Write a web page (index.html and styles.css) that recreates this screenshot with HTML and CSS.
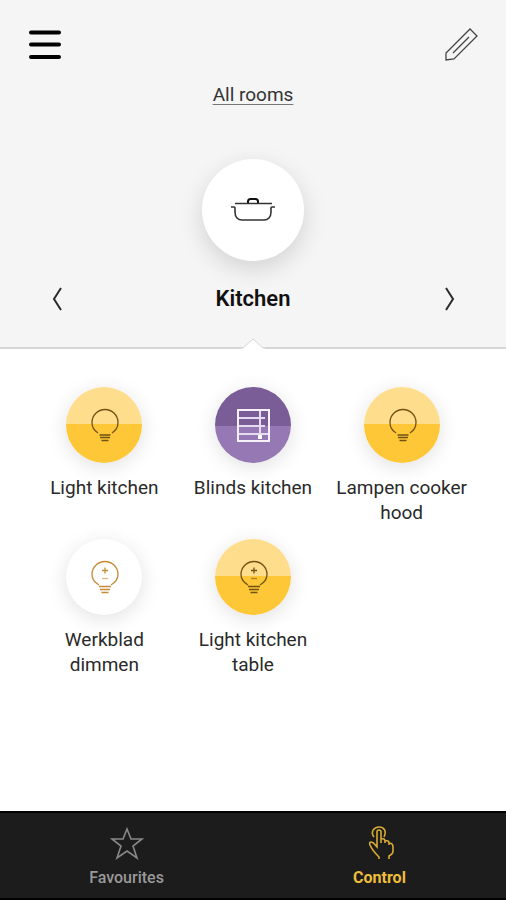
FILE: index.html
```html
<!DOCTYPE html>
<html lang="en">
<head>
<meta charset="utf-8">
<meta name="viewport" content="width=device-width, initial-scale=1">
<title>Kitchen</title>
<link rel="stylesheet" href="styles.css">
</head>
<body>
<svg class="symbols" aria-hidden="true">
  <symbol id="bulb" viewBox="0 0 36 36">
    <path d="M12 26C8 23.500 6 19 6 15.500a13 13 0 0 1 26 0c0 3.500-2 8-6 10.500"/>
    <path d="M13.500 28h11M14 30.500h10M15.500 33.500h7"/>
  </symbol>
  <symbol id="dimmer" viewBox="0 0 36 36">
    <path d="M13 26C8 23 6 19 6 15.500a13 13 0 0 1 26 0c0 3.500-2 7.500-7 10.500"/>
    <path d="M13 27.500h12M14 30.500h10M15.500 33.500h7M19 8.500v6M16 11.500h6"/>
    <path d="M16 19.500h6" opacity="0.600"/>
  </symbol>
</svg>
<header class="room">
  <div class="toolbar">
    <button class="icon-button" aria-label="Menu">
      <svg class="icon menu" viewBox="0 0 34 34"><path d="M3 4.500h28M3 16.500h28M3 29h28"/></svg>
    </button>
    <button class="icon-button" aria-label="Edit">
      <svg class="icon pencil" viewBox="0 0 34 34"><path d="M2 32v-7L26 1l7 7L10 31zM9 25 25 9"/></svg>
    </button>
  </div>
  <a class="all-rooms" href="#">All rooms</a>
  <div class="room-icon">
    <svg class="pot" viewBox="0 0 46 30"><path d="M5 8.500h37"/><path class="knob-line" d="M18 8V6.500Q18 4 20.500 4h5Q28 4 28 6.500V8"/><path d="M1 12h3q1 0 1 1v4c0 5 3 8 7 8h22c4 0 7-3 7-8v-4q0-1 1-1h3"/></svg>
  </div>
  <div class="room-switch">
    <button class="icon-button" aria-label="Previous room">
      <svg class="chevron" viewBox="0 0 12 28"><path d="M10 3 3 14l7 11"/></svg>
    </button>
    <h1>Kitchen</h1>
    <button class="icon-button" aria-label="Next room">
      <svg class="chevron" viewBox="0 0 12 28"><path d="M3 3l7 11-7 11"/></svg>
    </button>
  </div>
  <svg class="notch" viewBox="0 0 24 12" aria-hidden="true"><path d="M0 10h2L12 1l10 9h2v2H0z" class="notch-fill"/><path d="M0 10h2L12 1l10 9h2"/></svg>
</header>
<main class="devices">
  <button class="device">
    <span class="disc light"><svg class="glyph" viewBox="0 0 36 36"><use href="#bulb"/></svg></span>
    <span>Light kitchen</span>
  </button>
  <button class="device">
    <span class="disc blinds"><svg class="glyph" viewBox="0 0 36 36"><path class="frame" d="M3 3h31v31H3z"/><path d="M25 4v25M4 11h26M4 19h26M4 27h29"/><path class="knob" d="M23 28h4v4h-4z"/></svg></span>
    <span>Blinds kitchen</span>
  </button>
  <button class="device">
    <span class="disc light"><svg class="glyph" viewBox="0 0 36 36"><use href="#bulb"/></svg></span>
    <span>Lampen cooker hood</span>
  </button>
  <button class="device">
    <span class="disc off"><svg class="glyph" viewBox="0 0 36 36"><use href="#dimmer"/></svg></span>
    <span>Werkblad dimmen</span>
  </button>
  <button class="device">
    <span class="disc light"><svg class="glyph" viewBox="0 0 36 36"><use href="#dimmer"/></svg></span>
    <span>Light kitchen table</span>
  </button>
</main>
<nav class="tabs">
  <a class="tab" href="#">
    <svg class="tab-icon" viewBox="0 0 34 34"><path d="M17 3l4 10h11l-9 7 4 12-10-7-10 7 4-12-9-7h11z"/></svg>
    <span>Favourites</span>
  </a>
  <a class="tab active" href="#" aria-current="page">
    <svg class="tab-icon" viewBox="0 0 34 34"><path d="M16 33v-2C13 28 9 24 7 19q-1-3 1-3c3 0 4 3 6 5V6q0-2 2-2t2 2v11M18 13q4-1 4 2v2M22 15q4-1 4 2v2M26 17q4 0 4 4v4c0 3-2 4-4 5v3M11 11C7 6 11 1 16 1s8 4 5 10"/></svg>
    <span>Control</span>
  </a>
</nav>
</body>
</html>
```
FILE: styles.css
```css
* { box-sizing: border-box; }

body {
  margin: 0;
  min-height: 100vh;
  display: flex;
  flex-direction: column;
  background: #fff;
  color: #2a2a2a;
  font-family: Roboto, "Liberation Sans", sans-serif;
  font-size: 19px;
  line-height: 25px;
}

button {
  padding: 0;
  border: 0;
  background: none;
  color: inherit;
  font: inherit;
  cursor: pointer;
}

svg {
  display: block;
  fill: none;
  stroke: currentColor;
}

.symbols { position: absolute; width: 0; height: 0; }

.room {
  position: relative;
  display: flex;
  flex-direction: column;
  align-items: center;
  padding-bottom: 34px;
  background: #f5f5f5;
  border-bottom: 2px solid #d6d6d6;
}

.toolbar {
  align-self: stretch;
  display: flex;
  justify-content: space-between;
  padding: 28px 28px 0;
}

.icon { width: 34px; height: 34px; }
.menu { stroke: #000; stroke-width: 4px; stroke-linecap: round; }
.pencil { stroke: #444; stroke-width: 1.3; }

.all-rooms {
  margin-top: 20px;
  color: #333;
  text-decoration-color: #777;
  text-underline-offset: 3px;
  text-decoration-thickness: 1px;
}

.room-icon {
  display: grid;
  place-items: center;
  width: 102px;
  height: 102px;
  margin-top: 52px;
  border-radius: 50%;
  background: #fff;
  box-shadow: 0 8px 24px rgba(0, 0, 0, 0.14);
}

.pot { width: 46px; height: 30px; color: #333; stroke-width: 1.6; }
.knob-line { stroke: #111; stroke-width: 2; }

.room-switch {
  align-self: stretch;
  display: flex;
  justify-content: space-between;
  align-items: center;
  margin-top: 24px;
  padding: 0 51px;
}

.chevron { width: 12px; height: 28px; stroke-width: 2px; }

h1 {
  margin: 0;
  color: #111;
  font-size: 22px;
  font-weight: 600;
  line-height: 28px;
}

.notch {
  position: absolute;
  left: 50%;
  bottom: -3px;
  width: 24px;
  height: 12px;
  margin-left: -12px;
  stroke: #d6d6d6;
}

.notch-fill { fill: #fff; stroke: none; }

.devices {
  flex: 1;
  display: grid;
  grid-template-columns: repeat(3, 1fr);
  align-content: start;
  row-gap: 14px;
  padding: 38px 30px 24px;
}

.device {
  display: flex;
  flex-direction: column;
  align-items: center;
  gap: 12px;
  padding: 0 8px;
}

.disc {
  display: grid;
  place-items: center;
  width: 76px;
  height: 76px;
  border-radius: 50%;
  box-shadow: 0 4px 20px rgba(0, 0, 0, 0.12);
}

.glyph { width: 36px; height: 36px; stroke-width: 1.3; }
.light { background: linear-gradient(#fedd8c 49%, #fec737 49%); color: #705314; }
.blinds { background: linear-gradient(#7a5d96 51%, #9678b5 51%); color: #e6dcf0; }
.blinds .glyph { stroke-width: 2px; }
.frame { stroke: #f6f0fb; }
.knob { fill: #fff; stroke: none; }
.off { background: #fff; color: #c78b35; }

.tabs {
  display: flex;
  height: 89px;
  background: #1c1c1c;
  border-top: 2px solid #000;
  border-bottom: 2px solid #000;
}

.tab {
  flex: 1;
  display: flex;
  flex-direction: column;
  align-items: center;
  gap: 6px;
  padding-top: 13px;
  color: #999;
  font-size: 16px;
  font-weight: 500;
  line-height: 24px;
  text-decoration: none;
}

.tab-icon { width: 34px; height: 34px; stroke: #888; stroke-width: 1.6; }
.active { color: #efbd3b; font-weight: 700; }
.active .tab-icon { stroke: #d9ab35; }
```
